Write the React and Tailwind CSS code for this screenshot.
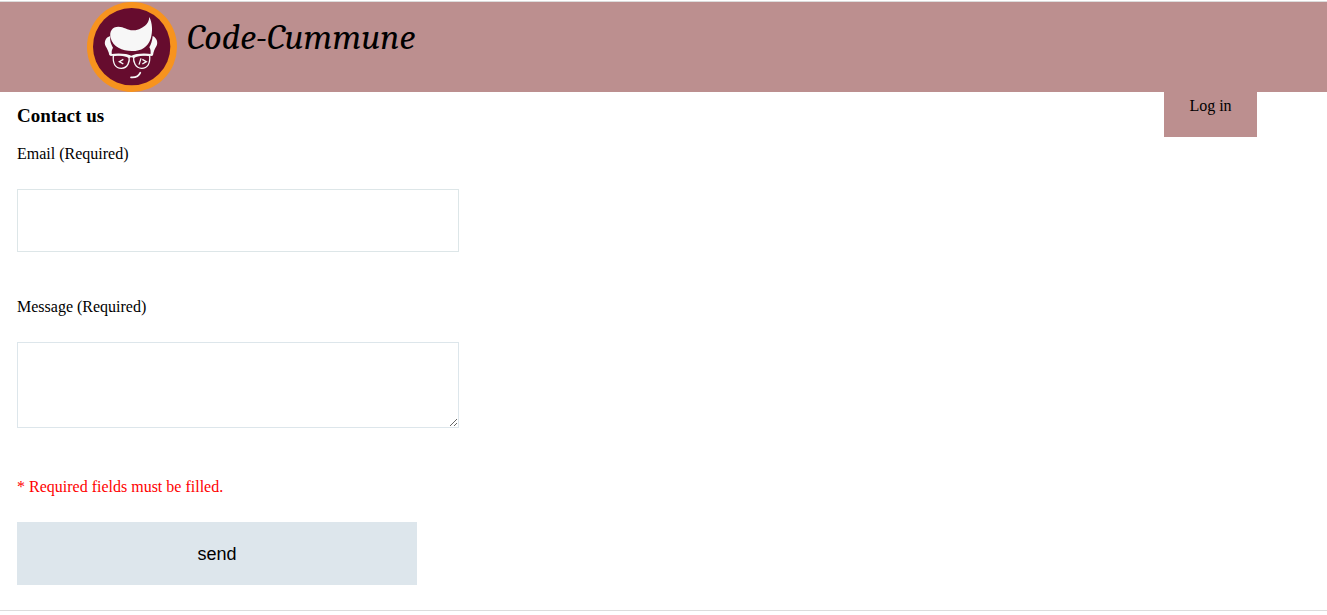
function Logo() {
  return (
    <svg viewBox="22 6 270 270" className="size-[90px] shrink-0" role="img" aria-label="Code-Cummune logo">
      <circle cx="157" cy="141" r="135" fill="#f7931e" />
      <circle cx="156" cy="140" r="116" fill="#660c2e" />
      <path
        fill="#f7f7f7"
        d="M93 114 C88 94 98 80 116 80 C134 80 144 92 162 91 C178 90 190 81 196 77 C204 71 208 63 209 51 C218 68 220 95 213 116 C204 141 186 153 157 153 C128 153 99 140 93 114 Z"
      />
      <path fill="#f7f7f7" d="M92 108 C77 112 72 127 78 139 C83 148 87 154 89 166 L97 166 C95 155 96 150 100 143 C95 134 90 124 92 108 Z" />
      <path fill="#f7f7f7" d="M219 108 C232 114 236 128 230 139 C225 147 222 154 220 166 L212 166 C214 155 213 148 209 142 C214 133 218 122 219 108 Z" />
      <path
        fill="none"
        stroke="#f7f7f7"
        strokeWidth="4"
        strokeLinejoin="round"
        d="M101 167 C114 163 136 164 148 168 C151 184 145 205 125 205 C107 205 99 191 101 167 Z M162 168 C174 164 198 163 210 167 C212 191 204 205 186 205 C167 205 160 185 162 168 Z"
      />
      <path fill="#f7f7f7" d="M91 163 C112 159 140 160 155 167 C170 160 198 159 219 163 L218 168 C197 165 175 166 162 175 C158 171 152 171 148 175 C136 166 113 165 92 168 Z" />
      <path
        fill="none"
        stroke="#f7f7f7"
        strokeWidth="4"
        d="M131 178 L119 185 L131 192 M184 175 L178 194 M188 178 L200 185 L188 192"
      />
      <path fill="none" stroke="#f7f7f7" strokeWidth="5" strokeLinecap="round" d="M154 232 C168 233 178 228 182 218" />
    </svg>
  );
}

export default function App() {
  return (
    <div className="bg-white pt-px font-['Liberation_Serif',serif] text-base text-black">
      <header className="flex h-[91px] border-t border-[#dcdcdc] bg-[#bc8f8f] pl-[87px]">
        <Logo />
        <h1 className="ml-[10px] pt-3 font-[Cambria,Caladea,'Liberation_Serif',serif] text-4xl leading-12 italic">Code-Cummune</h1>
      </header>
      <div className="flex items-start justify-between">
        <main className="w-full max-w-[476px] px-[17px] pt-3">
          <h2 className="text-[19px] leading-6 font-bold">Contact us</h2>
          <form className="mt-4" onSubmit={(e) => e.preventDefault()}>
            <label htmlFor="email" className="block leading-5">
              Email (Required)
            </label>
            <input id="email" type="email" required className="mt-[25px] block h-[63px] w-full border border-[#dde6e8] px-4 outline-none" />
            <label htmlFor="message" className="mt-[45px] block leading-5">
              Message (Required)
            </label>
            <textarea id="message" required className="mt-[25px] block h-[86px] w-full resize border border-[#dde6eb] p-4 outline-none" />
            <p className="mt-[49px] leading-5 text-[#ff0000]">* Required fields must be filled.</p>
            <button type="submit" className="mt-[25px] block h-[63px] w-[400px] max-w-full bg-[#dde6ec] font-['Liberation_Sans',sans-serif] text-lg">
              send
            </button>
          </form>
        </main>
        <nav className="mr-[70px] shrink-0">
          <a href="#login" className="block h-[45px] min-w-[93px] bg-[#bc8f8f] pt-1 text-center leading-5">
            Log in
          </a>
        </nav>
      </div>
      <footer className="mt-[25px] border-t border-[#dcdcdc]" />
    </div>
  );
}
